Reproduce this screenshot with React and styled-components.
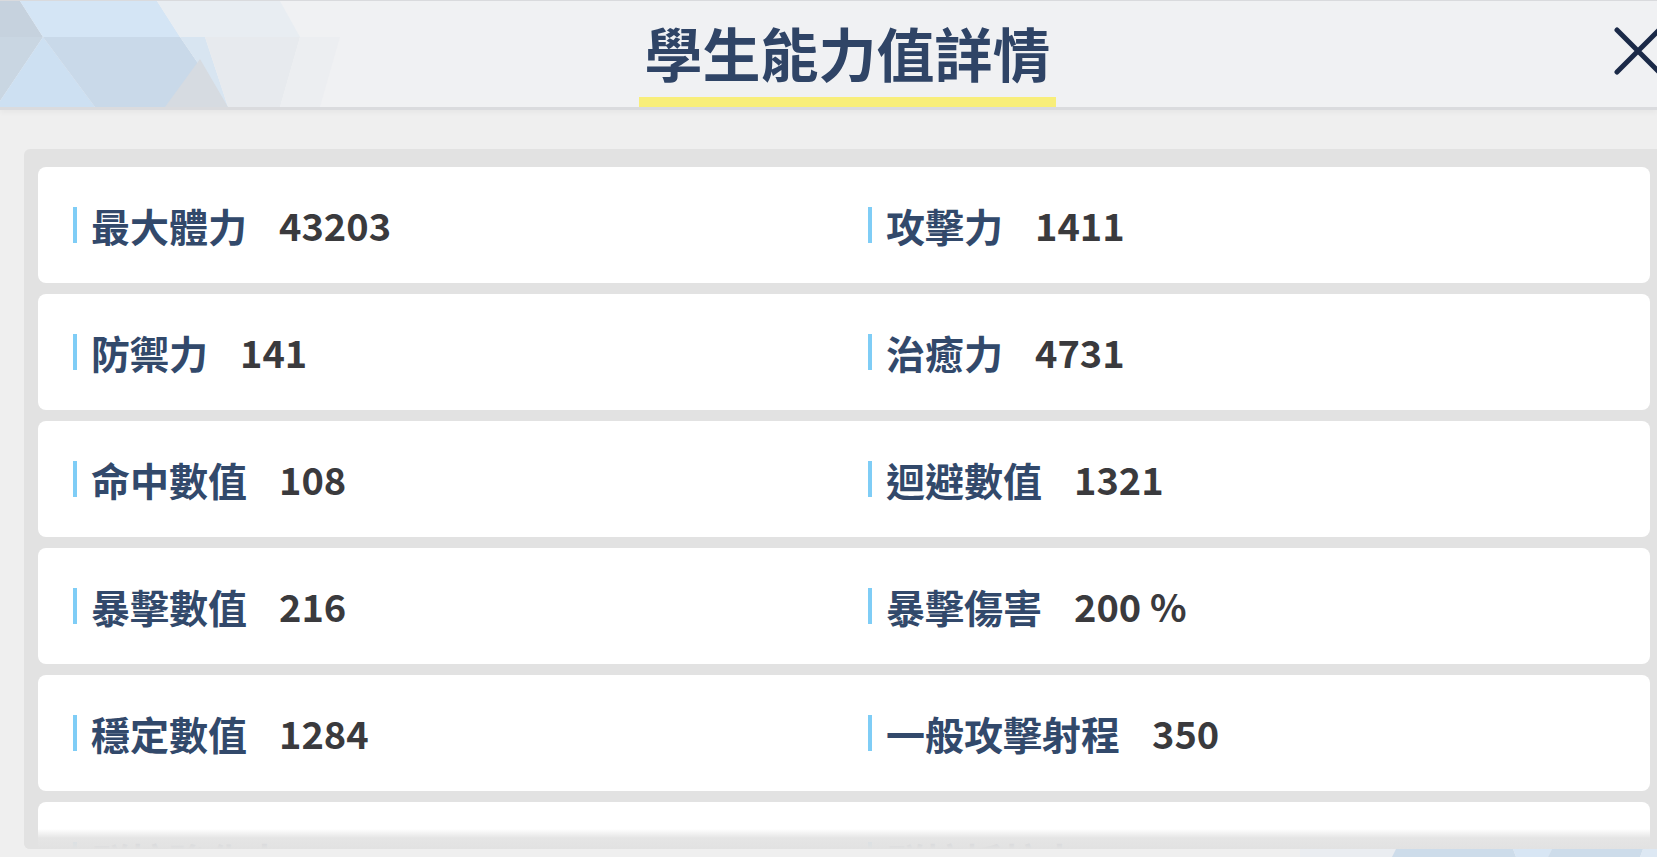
import React from 'react';
import styled, { createGlobalStyle } from 'styled-components';

const stats = [
  [{ label: '最大體力', value: '43203' }, { label: '攻擊力', value: '1411' }],
  [{ label: '防禦力', value: '141' }, { label: '治癒力', value: '4731' }],
  [{ label: '命中數值', value: '108' }, { label: '迴避數值', value: '1321' }],
  [{ label: '暴擊數值', value: '216' }, { label: '暴擊傷害', value: '200 %' }],
  [{ label: '穩定數值', value: '1284' }, { label: '一般攻擊射程', value: '350' }],
  [{ label: '群控強化力', value: '100' }, { label: '群控抵抗力', value: '100' }],
];

const HeaderPattern = () => (
  <PatternSvg width="360" height="106" viewBox="0 0 360 106">
    <polygon points="0,0 20,0 43,36 0,36" fill="#c6d2de" />
    <polygon points="20,0 157,0 180,36 43,36" fill="#d4e5f5" />
    <polygon points="157,0 280,0 300,36 180,36" fill="#e8edf2" />
    <polygon points="0,36 43,36 0,100" fill="#c9d6e2" />
    <polygon points="0,100 43,36 95,106 0,106" fill="#cde0f2" />
    <polygon points="43,36 180,36 228,106 95,106" fill="#c9d9e9" />
    <polygon points="180,36 205,36 228,106" fill="#d8e5f1" />
    <polygon points="165,106 200,58 228,106" fill="#d6dbe1" />
    <polygon points="205,36 300,36 280,106 228,106" fill="#e7eaee" />
    <polygon points="300,36 340,36 320,106 280,106" fill="#eceef1" />
  </PatternSvg>
);

const FooterPattern = () => (
  <svg width="1657" height="8" viewBox="0 0 1657 8">
    <polygon points="1300,0 1396,0 1392,8 1300,8" fill="#eaedf1" />
    <polygon points="1396,0 1513,0 1516,8 1392,8" fill="#cddcea" />
    <polygon points="1513,0 1552,0 1548,8 1516,8" fill="#d8e6f4" />
    <polygon points="1552,0 1643,0 1640,8 1548,8" fill="#cddcea" />
    <polygon points="1643,0 1657,0 1657,8 1640,8" fill="#dde8f3" />
  </svg>
);

const CloseIcon = () => (
  <svg width="48" height="48" viewBox="0 0 48 48">
    <path d="M3 3 L45 45 M45 3 L3 45" stroke="#1b2a48" strokeWidth="5" strokeLinecap="round" fill="none" />
  </svg>
);

const StatItem = ({ label, value }) => (
  <Item>
    <Accent />
    <Label>{label}</Label>
    <Value>{value}</Value>
  </Item>
);

export default function App() {
  return (
    <>
      <GlobalStyle />
      <Screen>
        <Header>
          <HeaderPattern />
          <span />
          <TitleWrap>
            <Title>學生能力值詳情</Title>
            <Underline />
          </TitleWrap>
          <CloseButton aria-label="close">
            <CloseIcon />
          </CloseButton>
        </Header>
        <Body>
          <Panel>
            <CardList>
              {stats.map((row, i) => (
                <Card key={i}>
                  {row.map(s => (
                    <StatItem key={s.label} label={s.label} value={s.value} />
                  ))}
                </Card>
              ))}
            </CardList>
            <Fade />
          </Panel>
        </Body>
        <Footer>
          <FooterPattern />
        </Footer>
      </Screen>
    </>
  );
}

const GlobalStyle = createGlobalStyle`
  html, body {
    margin: 0;
    padding: 0;
    overflow: hidden;
    background: #efefef;
  }
  * { box-sizing: border-box; }
`;

const Screen = styled.div`
  width: 1657px;
  height: 857px;
  overflow: hidden;
  display: flex;
  flex-direction: column;
  background: #efefef;
  font-family: "Noto Sans CJK TC", "Noto Sans", sans-serif;
`;

const Header = styled.header`
  position: relative;
  flex-shrink: 0;
  height: 110px;
  display: grid;
  grid-template-columns: 1fr auto 1fr;
  align-items: end;
  padding-left: 38px;
  background: #f0f1f3;
  border-top: 1px solid #d9dadd;
  border-bottom: 3px solid #dadbde;
  box-shadow: 0 3px 5px rgba(0, 0, 0, 0.035);
  z-index: 1;
`;

const PatternSvg = styled.svg`
  position: absolute;
  left: 0;
  top: 0;
  pointer-events: none;
`;

const TitleWrap = styled.div`
  position: relative;
  display: flex;
  flex-direction: column;
  align-items: center;
`;

const Title = styled.h1`
  margin: 0 5px 16px;
  font-size: 58px;
  line-height: 1;
  font-weight: 700;
  color: #2f4466;
  white-space: nowrap;
`;

const Underline = styled.div`
  width: 100%;
  height: 10px;
  background: #f8ee7a;
`;

const CloseButton = styled.button`
  justify-self: end;
  align-self: start;
  margin-top: 26px;
  margin-right: -5px;
  padding: 0;
  border: none;
  background: none;
  display: flex;
`;

const Body = styled.main`
  flex: 1;
  padding: 39px 0 0 24px;
  overflow: hidden;
`;

const Panel = styled.section`
  position: relative;
  width: 1640px;
  height: 700px;
  padding: 18px 14px 0;
  background: #e2e2e2;
  border-radius: 6px;
  overflow: hidden;
`;

const CardList = styled.div`
  display: flex;
  flex-direction: column;
  gap: 11px;
`;

const Card = styled.div`
  flex-shrink: 0;
  height: 116px;
  display: grid;
  grid-template-columns: 795px 1fr;
  align-items: center;
  padding-left: 35px;
  background: #ffffff;
  border-radius: 8px;
`;

const Item = styled.div`
  display: flex;
  align-items: center;
`;

const Accent = styled.span`
  width: 4px;
  height: 36px;
  margin-right: 14px;
  background: #7fcdf6;
`;

const Label = styled.span`
  font-size: 39px;
  line-height: 1;
  font-weight: 700;
  color: #32496b;
  white-space: nowrap;
`;

const Value = styled.span`
  margin-left: 32px;
  font-size: 38px;
  line-height: 1;
  font-weight: 700;
  color: #3a3a3d;
  white-space: nowrap;
`;

const Fade = styled.div`
  position: absolute;
  left: 0;
  right: 0;
  bottom: 0;
  height: 20px;
  background: linear-gradient(to bottom, rgba(226, 226, 226, 0), rgba(226, 226, 226, 0.9) 45%, #e2e2e2);
`;

const Footer = styled.footer`
  flex-shrink: 0;
  height: 8px;
  display: flex;
`;
